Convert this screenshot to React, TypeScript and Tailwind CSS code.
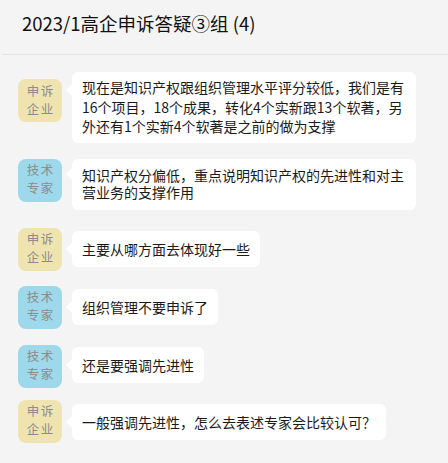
import React from "react";

type Msg = {
  role: "corp" | "expert";
  text: string;
  mt: string;
  avatarMt: string;
  bubbleMt: string;
  pad: string;
  leading: string;
  tri: string;
};

const msgs: Msg[] = [
  {
    role: "corp",
    text: "现在是知识产权跟组织管理水平评分较低，我们是有16个项目，18个成果，转化4个实新跟13个软著，另外还有1个实新4个软著是之前的做为支撑",
    mt: "mt-[16px]",
    avatarMt: "mt-[7px]",
    bubbleMt: "mt-0",
    pad: "py-[6px]",
    leading: "leading-[19.5px]",
    tri: "top-[12px]",
  },
  {
    role: "expert",
    text: "知识产权分偏低，重点说明知识产权的先进性和对主营业务的支撑作用",
    mt: "mt-[16px]",
    avatarMt: "mt-0",
    bubbleMt: "mt-0",
    pad: "py-[8px]",
    leading: "leading-[17.5px]",
    tri: "top-[9px]",
  },
  {
    role: "corp",
    text: "主要从哪方面去体现好一些",
    mt: "mt-[18px]",
    avatarMt: "mt-0",
    bubbleMt: "mt-[3px]",
    pad: "py-[8px]",
    leading: "leading-[20px]",
    tri: "top-[12px]",
  },
  {
    role: "expert",
    text: "组织管理不要申诉了",
    mt: "mt-[15px]",
    avatarMt: "mt-0",
    bubbleMt: "mt-[3px]",
    pad: "py-[8px]",
    leading: "leading-[20px]",
    tri: "top-[12px]",
  },
  {
    role: "expert",
    text: "还是要强调先进性",
    mt: "mt-[16px]",
    avatarMt: "mt-0",
    bubbleMt: "mt-[2px]",
    pad: "py-[8px]",
    leading: "leading-[20px]",
    tri: "top-[12px]",
  },
  {
    role: "corp",
    text: "一般强调先进性，怎么去表述专家会比较认可？",
    mt: "mt-[12px]",
    avatarMt: "mt-0",
    bubbleMt: "mt-[4px]",
    pad: "py-[8px]",
    leading: "leading-[20px]",
    tri: "top-[12px]",
  },
];

function Avatar({ role, mt }: { role: "corp" | "expert"; mt: string }) {
  const corp = role === "corp";
  return (
    <div
      className={`${mt} shrink-0 w-[44px] h-[43px] rounded-[8px] flex flex-col items-center justify-center text-[12.5px] leading-[18px] tracking-[1.5px] pl-[1.5px] pb-[2px] text-[#8c8c8c] ${
        corp ? "bg-[#efe3b0]" : "bg-[#9dd9ea]"
      }`}
    >
      <div>{corp ? "申诉" : "技术"}</div>
      <div>{corp ? "企业" : "专家"}</div>
    </div>
  );
}

export default function App() {
  return (
    <div className="w-[448px] h-[463px] overflow-hidden bg-[#f4f4f4] font-['Noto_Sans_CJK_SC','Microsoft_YaHei',sans-serif] text-[#1a1a1a]">
      <div className="h-[54px] pt-[10px] pl-[22px] text-[18.5px] leading-[26px] text-[#111]">
        2023/1高企申诉答疑③组 (4)
      </div>
      <div className="ml-[3px] h-px bg-[#e3e3e3]" />
      <div className="pl-[18px] pt-px">
        {msgs.map((m, i) => (
          <div key={i} className={`${m.mt} flex items-start gap-[10px]`}>
            <Avatar role={m.role} mt={m.avatarMt} />
            <div
              className={`${m.bubbleMt} relative max-w-[344px] bg-white rounded-[6px] px-[10px] ${m.pad} ${m.leading} text-[14px]`}
            >
              <span
                className={`absolute ${m.tri} left-[-6px] w-0 h-0 border-y-[6px] border-y-transparent border-r-[6px] border-r-white`}
              />
              {m.text}
            </div>
          </div>
        ))}
      </div>
    </div>
  );
}
